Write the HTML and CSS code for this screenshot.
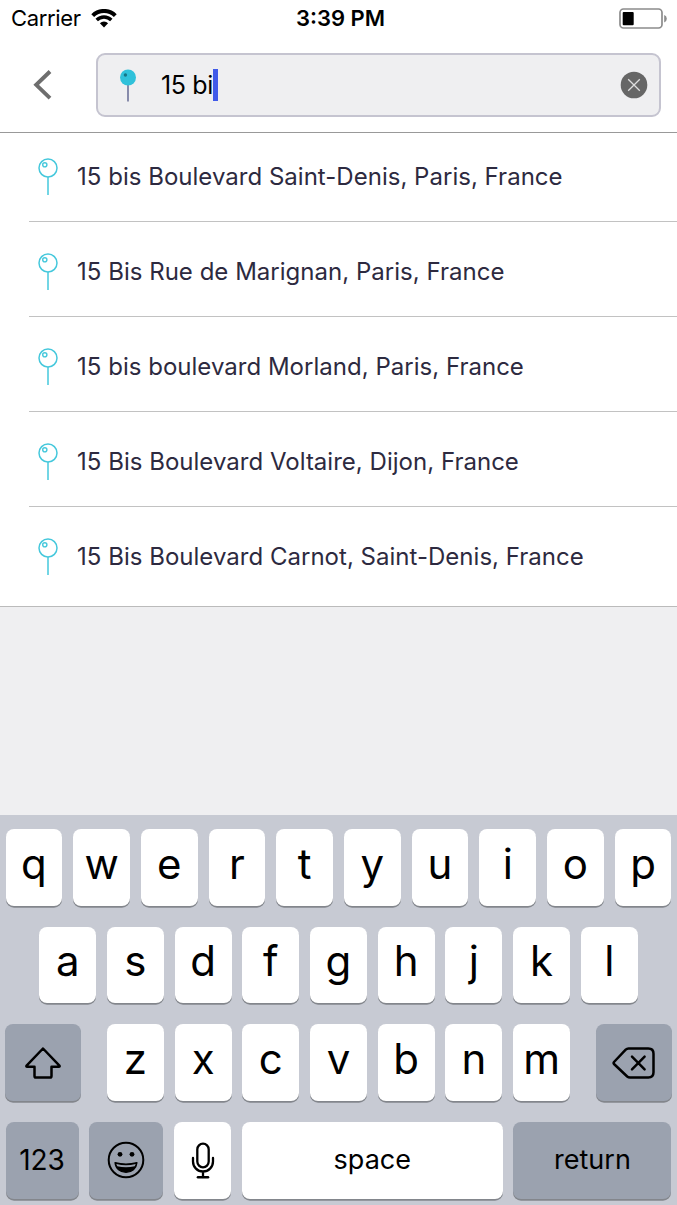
FILE: index.html
```html
<!DOCTYPE html>
<html lang="en">
<head>
    <meta charset="UTF-8">
    <title>Address search</title>
    <link rel="stylesheet" href="styles.css">
</head>

<body>
    <!-- shared by every result row -->
    <svg class="defs" width="0" height="0">
        <symbol id="pin" viewBox="0 0 20 38">
            <circle cx="10" cy="10" r="9" fill="none" stroke="#45c8dc" stroke-width="1.5"/>
            <circle cx="6.8" cy="6.8" r="2.1" fill="none" stroke="#45c8dc" stroke-width="1.4"/>
            <path d="M10 19v18" stroke="#45c8dc" stroke-width="1.5"/>
        </symbol>
    </svg>

    <div class="status">
        <div class="carrier">
            <span>Carrier</span>
            <svg width="26" height="19" viewBox="0 0 26 19">
                <path d="M1.700 6.600a16 16 0 0 1 22.600 0" fill="none" stroke="#000" stroke-width="4"/>
                <path d="M5.700 11a10.300 10.300 0 0 1 14.600 0" fill="none" stroke="#000" stroke-width="3.400"/>
                <path d="M8.900 14.300a5.800 5.800 0 0 1 8.200 0L13 18.400z"/>
            </svg>
        </div>
        <div class="time">3:39 PM</div>
        <svg class="battery" width="49" height="22" viewBox="0 0 49 22">
            <rect x="1" y="1" width="42" height="19" rx="3.500" fill="none" stroke="#8c8c8c" stroke-width="1.700"/>
            <rect x="3.700" y="4" width="11" height="13.300" rx="1"/>
            <path d="M45.200 7v7.500q2.600-1 2.600-3.800t-2.600-3.700z" fill="#8c8c8c"/>
        </svg>
    </div>

    <div class="header">
        <svg class="back" width="20" height="30" viewBox="0 0 20 30">
            <path d="M18 1.500L4.200 14.800 18 28.100" fill="none" stroke="#6e6e6e" stroke-width="3.900"/>
        </svg>
        <div class="search">
            <svg width="18" height="34" viewBox="0 0 18 34">
                <path d="M9 16v17.500" stroke="#7c80a4" stroke-width="1.800"/>
                <circle cx="9" cy="9.500" r="8" fill="#30c1da"/>
                <circle cx="6.400" cy="7" r="1.700" fill="#167688"/>
            </svg>
            <span class="query">15 bi</span>
            <svg class="clear" width="28" height="28" viewBox="0 0 28 28">
                <circle cx="14" cy="14" r="13.300" fill="#666"/>
                <path d="M8.200 8.200l11.600 11.600M19.800 8.200L8.200 19.800" stroke="#ddd" stroke-width="1.300"/>
            </svg>
        </div>
    </div>

    <ul class="results">
        <li><svg width="20" height="38"><use href="#pin"/></svg><span>15 bis Boulevard Saint-Denis, Paris, France</span></li>
        <li><svg width="20" height="38"><use href="#pin"/></svg><span>15 Bis Rue de Marignan, Paris, France</span></li>
        <li><svg width="20" height="38"><use href="#pin"/></svg><span>15 bis boulevard Morland, Paris, France</span></li>
        <li><svg width="20" height="38"><use href="#pin"/></svg><span>15 Bis Boulevard Voltaire, Dijon, France</span></li>
        <li><svg width="20" height="38"><use href="#pin"/></svg><span>15 Bis Boulevard Carnot, Saint-Denis, France</span></li>
    </ul>

    <div class="keyboard">
        <div class="keys">
            <div class="key">q</div>
            <div class="key">w</div>
            <div class="key">e</div>
            <div class="key">r</div>
            <div class="key">t</div>
            <div class="key">y</div>
            <div class="key">u</div>
            <div class="key">i</div>
            <div class="key">o</div>
            <div class="key">p</div>
        </div>
        <div class="keys">
            <div class="key">a</div>
            <div class="key">s</div>
            <div class="key">d</div>
            <div class="key">f</div>
            <div class="key">g</div>
            <div class="key">h</div>
            <div class="key">j</div>
            <div class="key">k</div>
            <div class="key">l</div>
        </div>
        <div class="keys spread">
            <div class="key dark wide">
                <svg width="38" height="34" viewBox="0 0 38 34">
                    <path d="M19 2.500L2.600 19.600q-.8 1.100.6 1.100h7.300v9.300q0 1.600 1.600 1.600h13.800q1.600 0 1.600-1.600v-9.300h7.300q1.400 0 .6-1.100z" fill="none" stroke="#000" stroke-width="2.500" stroke-linejoin="round"/>
                </svg>
            </div>
            <div class="keys">
                <div class="key">z</div>
                <div class="key">x</div>
                <div class="key">c</div>
                <div class="key">v</div>
                <div class="key">b</div>
                <div class="key">n</div>
                <div class="key">m</div>
            </div>
            <div class="key dark wide">
                <svg width="44" height="34" viewBox="0 0 44 34">
                    <path d="M16.500 2.500h19.800q5.200 0 5.200 5.200v18.600q0 5.200-5.200 5.200H18q-1.600 0-2.800-1L2 18q-.8-1 0-2L13.700 3.700q1.200-1.200 2.800-1.200z" fill="none" stroke="#000" stroke-width="2.500" stroke-linejoin="round"/>
                    <path d="M20 10.700l12.600 12.600M32.600 10.700L20 23.300" stroke="#000" stroke-width="2.500" stroke-linecap="round"/>
                </svg>
            </div>
        </div>
        <div class="keys">
            <div class="key dark numbers">123</div>
            <div class="key dark emoji">
                <svg width="38" height="38" viewBox="0 0 38 38">
                    <circle cx="19" cy="19" r="17.300" fill="none" stroke="#000" stroke-width="2"/>
                    <circle cx="13" cy="13.300" r="2.400"/>
                    <circle cx="25" cy="13.300" r="2.400"/>
                    <path d="M8 21.600q11 3 22 0c-.6 6-5.200 9.700-11 9.700S8.600 27.600 8 21.600z" stroke="#000" stroke-width="1.200" stroke-linejoin="round"/>
                    <path d="M9.300 23q9.700 2.400 19.400 0l-1 2.300q-8.700 2-17.400 0z" fill="#9ba2af"/>
                </svg>
            </div>
            <div class="key mic">
                <svg width="24" height="37" viewBox="0 0 24 37">
                    <rect x="6.300" y="1.700" width="11.400" height="23.600" rx="5.700" fill="none" stroke="#000" stroke-width="2.300"/>
                    <path d="M2 16v3.500a10 10 0 0 0 20 0V16M12 29.500V35" fill="none" stroke="#000" stroke-width="2.300" stroke-linecap="round"/>
                    <path d="M7 35.200h10" stroke="#000" stroke-width="2.600" stroke-linecap="round"/>
                </svg>
            </div>
            <div class="key space">space</div>
            <div class="key dark return">return</div>
        </div>
    </div>
</body>
</html>
```
FILE: styles.css
```css
* {
    box-sizing: border-box;
}
body {
    display: flex;
    flex-direction: column;
    margin: 0;
    width: 677px;
    height: 1205px;
    overflow: hidden;
    background-color: #efeff1;
    font-family: Inter, 'Liberation Sans', sans-serif;
    color: #000;
}
svg {
    display: block;
    flex: none;
}
svg.defs {
    display: none;
}

/* status bar */
.status {
    display: grid;
    grid-template-columns: 1fr auto 1fr;
    align-items: center;
    height: 37px;
    padding: 0 9px 0 11px;
    background-color: #fff;
    font-size: 22px;
    line-height: 37px;
}
.carrier {
    display: flex;
    align-items: center;
    gap: 10px;
    letter-spacing: -.35px;
}
.time {
    padding-left: 2px;
    font-weight: 600;
}
.battery {
    justify-self: end;
}

/* search header */
.header {
    display: flex;
    align-items: center;
    height: 96px;
    padding: 0 16px 0 32px;
    border-bottom: 1px solid #999;
    background-color: #fff;
}
.search {
    display: flex;
    align-items: center;
    width: 565px;
    height: 64px;
    margin-left: 44px;
    padding: 0 11px 0 21px;
    border: 2px solid #c5c4d0;
    border-radius: 9px;
    background-color: #efeff1;
}
.query {
    margin-left: 24px;
    border-right: 5px solid #405ae9;
    font-size: 25px;
    letter-spacing: -.35px;
    line-height: 32px;
}
.clear {
    margin-left: auto;
}

/* results */
.results {
    margin: 0;
    padding: 0 0 0 29px;
    border-bottom: 1px solid #bbb;
    background-color: #fff;
    list-style: none;
}
.results li {
    display: flex;
    align-items: center;
    gap: 19.5px;
    height: 95px;
    padding: 5px 0 0 8.5px;
    border-bottom: 1px solid #c2c2c2;
    color: #2d2a40;
    font-size: 24px;
    letter-spacing: .02px;
}
.results li:first-child {
    height: 89px;
    padding-top: 0;
}
.results li:first-child span {
    padding-bottom: 1px;
}
.results li:last-child {
    height: 99px;
    padding-top: 0;
    border-bottom: 0;
}

/* keyboard */
.keyboard {
    display: flex;
    flex-direction: column;
    gap: 21.2px;
    height: 390px;
    margin-top: auto;
    padding: 14px 5.3px 0;
    background-color: #c7cad3;
}
.keys {
    display: flex;
    justify-content: center;
    gap: 10.9px;
}
.spread {
    justify-content: space-between;
}
.key {
    display: flex;
    align-items: center;
    justify-content: center;
    flex: none;
    width: 56.8px;
    height: 76.5px;
    padding-bottom: 7px;
    border-radius: 8px;
    background-color: #fff;
    box-shadow: 0 1.7px 0 #83868c;
    font-size: 42px;
    font-weight: 400;
    line-height: 50px;
}
.dark {
    padding-bottom: 0;
    background-color: #9ba2af;
}
.wide {
    width: 75.7px;
}
.numbers {
    width: 73px;
    font-size: 28px;
}
.emoji {
    width: 74px;
}
.mic {
    padding-bottom: 0;
}
.space, .return {
    padding-bottom: 1px;
    font-size: 27px;
}
.space {
    width: 260.6px;
}
.return {
    width: 158px;
}
```
